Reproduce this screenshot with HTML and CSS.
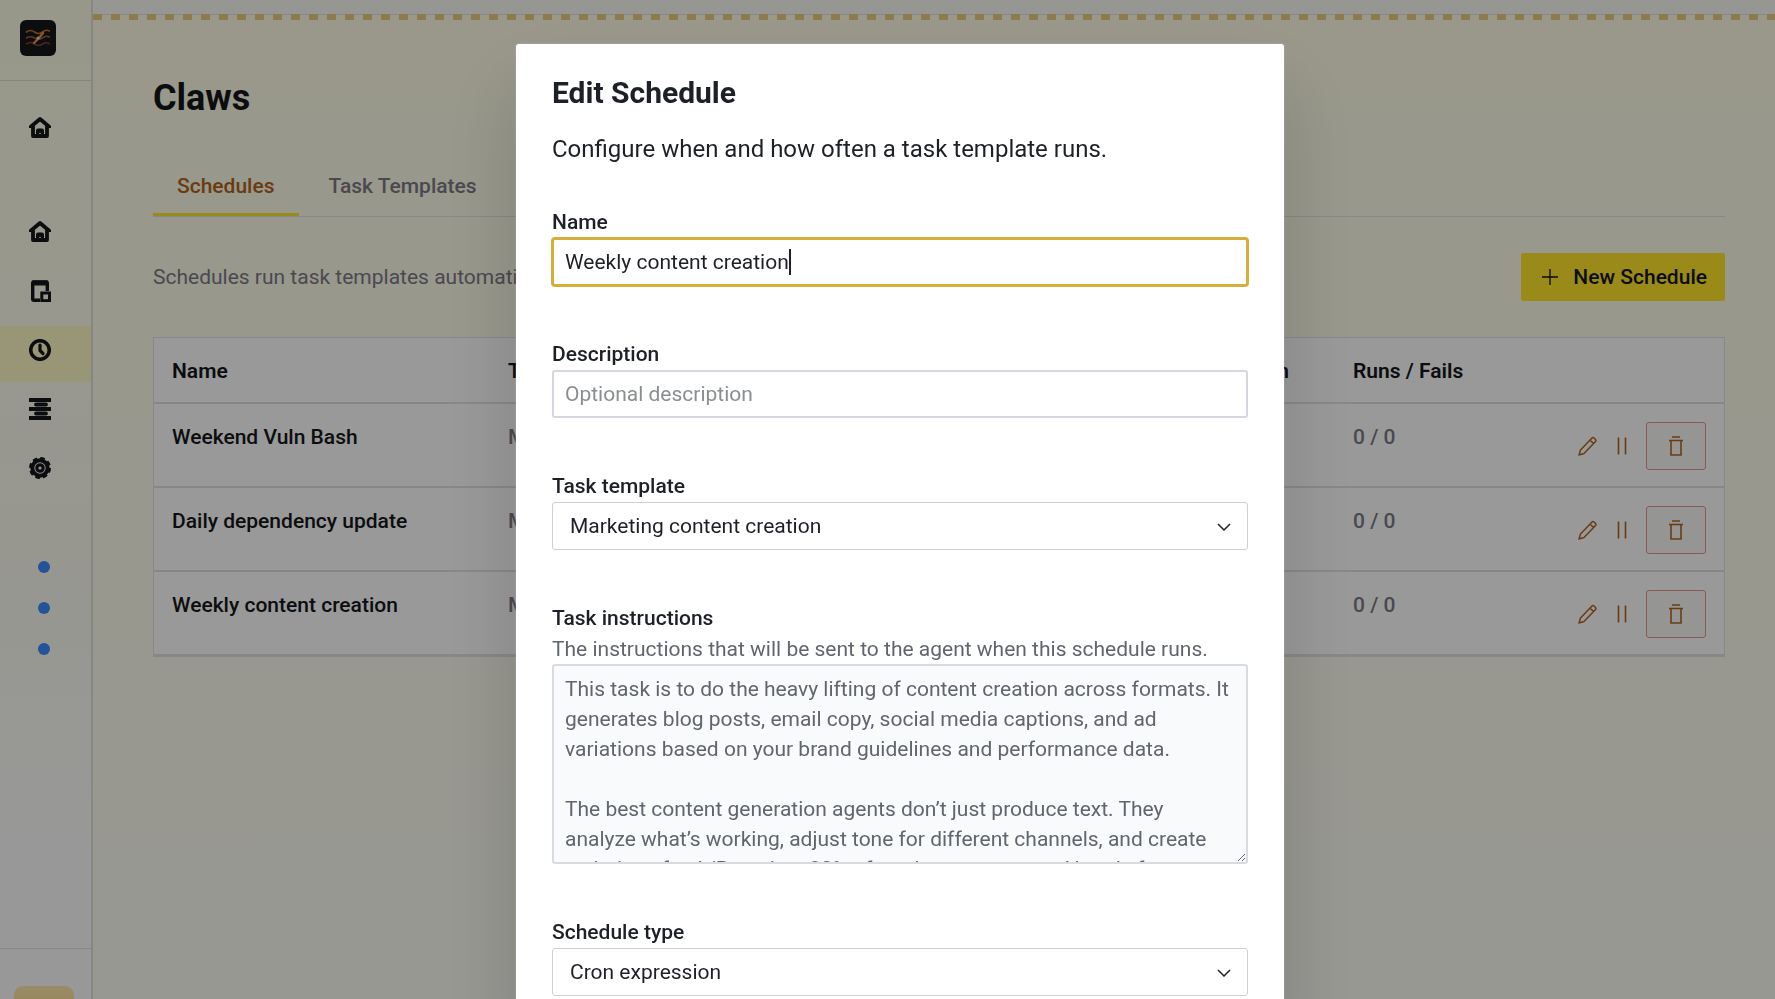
FILE: index.html
```
<!DOCTYPE html>
<html lang="en">
<head>
    <meta charset="UTF-8">
    <meta name="viewport" content="width=device-width, initial-scale=1">
    <title>Claws - Schedules</title>
    <link rel="stylesheet" href="styles.css">
</head>
<body>
    <svg class="sprite" aria-hidden="true">
        <symbol id="icon-home" viewBox="0 0 22 22">
            <path d="M1.800 11V9.800L11 2l9.200 7.800V11M4 9v10h14V9" fill="none" stroke="currentColor" stroke-width="3.800" stroke-linejoin="round"/>
            <path d="M7 20v-6.500q0-2 2-2h4q2 0 2 2V20h-3.200v-4h-1.600v4z" fill="currentColor"/>
        </symbol>
        <symbol id="icon-pencil" viewBox="0 0 20 20">
            <path d="M1 19l1.500-5L14 2q1-1 2 0l1.500 1.500q1 1 0 2L6 17.500zM12 4l3.500 3.500" fill="none" stroke="currentColor" stroke-width="1.500" stroke-linejoin="round"/>
        </symbol>
        <symbol id="icon-pause" viewBox="0 0 20 20">
            <path d="M6.500 1.500v17M13.500 1.500v17" fill="none" stroke="currentColor" stroke-width="1.600"/>
        </symbol>
        <symbol id="icon-trash" viewBox="0 0 20 20">
            <path d="M6 1h8M3 4.500h14M5 4.500v14.500h10V4.500" fill="none" stroke="currentColor" stroke-width="1.600"/>
        </symbol>
    </svg>

    <div class="app">
        <nav class="sidebar" aria-label="Main">
            <div class="sidebar-header">
                <a class="logo" href="#" aria-label="Home page">
                    <svg viewBox="0 0 36 36" width="36" height="36" fill="none" stroke-width="1.600" stroke-linecap="round">
                        <path d="M6.500 12q4-3 8 0t8 0q3-3 7-1" stroke="#c06f2c"/>
                        <path d="M6.500 18q4-2.500 8 0t8 0q3-3 7-1" stroke="#a05a33"/>
                        <path d="M6.500 24q4-3 8 0t8 0q4-2.500 7 0" stroke="#7a4030"/>
                        <path d="M14 23l5-5 4-5" stroke="#e0944a" stroke-width="2.400"/>
                        <circle cx="18" cy="18" r="1.500" fill="#f0e0c8"/>
                    </svg>
                </a>
            </div>
            <a class="nav-item nav-home" href="#" aria-label="Home"><svg><use href="#icon-home"/></svg></a>
            <div class="nav-list">
                <a class="nav-item" href="#" aria-label="Overview"><svg><use href="#icon-home"/></svg></a>
                <a class="nav-item" href="#" aria-label="Tasks">
                    <svg viewBox="0 0 22 22" fill="none" stroke="currentColor">
                        <path d="M11 20.300H5Q3.700 20.300 3.700 19V3.500Q3.700 2 5 2h12q1.300 0 1.300 1.500V11" stroke-width="3.400"/>
                        <path d="M3 3h16" stroke-width="5"/>
                        <rect x="12.800" y="13" width="7.700" height="7.700" stroke-width="3"/>
                    </svg>
                </a>
                <a class="nav-item active" href="#" aria-label="Claws">
                    <svg viewBox="0 0 22 22" fill="none" stroke="currentColor">
                        <circle cx="11" cy="11" r="9.300" stroke-width="3.600"/>
                        <path d="M11 6v5.500l3 3" stroke-width="3.200" stroke-linecap="round"/>
                    </svg>
                </a>
                <a class="nav-item" href="#" aria-label="Logs">
                    <svg viewBox="0 0 22 22" fill="none" stroke="currentColor" stroke-width="3.800">
                        <path d="M0 2h22M0 11h22M0 20h22"/>
                        <path d="M7 6.500h10M7 15.500h10" stroke-linecap="round"/>
                    </svg>
                </a>
                <a class="nav-item" href="#" aria-label="Settings">
                    <svg viewBox="0 0 22 22" fill="none" stroke="currentColor">
                        <circle cx="11" cy="11" r="7.700" stroke-width="4"/>
                        <circle cx="11" cy="11" r="9.500" stroke-width="3" stroke-dasharray="4.460 3"/>
                        <circle cx="11" cy="11" r="3.200" stroke-width="3.200"/>
                    </svg>
                </a>
            </div>
            <div class="status-dots">
                <span class="dot"></span>
                <span class="dot"></span>
                <span class="dot"></span>
            </div>
            <div class="sidebar-footer">
                <button class="avatar" type="button" aria-label="Account"></button>
            </div>
        </nav>

        <main class="main">
            <div class="top-strip"></div>
            <div class="content">
                <h1 class="page-title">Claws</h1>
                <div class="tabs">
                    <a class="tab active" href="#">Schedules</a>
                    <a class="tab" href="#">Task Templates</a>
                </div>
                <div class="toolbar">
                    <p>Schedules run task templates automatically.</p>
                    <button class="new-button" type="button">
                        <svg viewBox="0 0 16 16" width="16" height="16"><path d="M8 0v16M0 8h16" stroke="currentColor" stroke-width="1.400"/></svg>
                        New Schedule
                    </button>
                </div>
                <table class="schedules">
                    <colgroup>
                        <col class="col-name">
                        <col>
                        <col>
                        <col class="col-next">
                        <col class="col-runs">
                        <col class="col-actions">
                    </colgroup>
                    <thead>
                        <tr>
                            <th>Name</th>
                            <th>Template</th>
                            <th>Schedule</th>
                            <th>Next run</th>
                            <th>Runs / Fails</th>
                            <th></th>
                        </tr>
                    </thead>
                    <tbody>
                        <tr>
                            <td class="name">Weekend Vuln Bash</td>
                            <td>Manual</td>
                            <td></td>
                            <td></td>
                            <td>0 / 0</td>
                            <td>
                                <div class="actions">
                                    <button type="button" aria-label="Edit"><svg><use href="#icon-pencil"/></svg></button>
                                    <button type="button" aria-label="Pause"><svg><use href="#icon-pause"/></svg></button>
                                    <button class="delete" type="button" aria-label="Delete"><svg><use href="#icon-trash"/></svg></button>
                                </div>
                            </td>
                        </tr>
                        <tr>
                            <td class="name">Daily dependency update</td>
                            <td>Manual</td>
                            <td></td>
                            <td></td>
                            <td>0 / 0</td>
                            <td>
                                <div class="actions">
                                    <button type="button" aria-label="Edit"><svg><use href="#icon-pencil"/></svg></button>
                                    <button type="button" aria-label="Pause"><svg><use href="#icon-pause"/></svg></button>
                                    <button class="delete" type="button" aria-label="Delete"><svg><use href="#icon-trash"/></svg></button>
                                </div>
                            </td>
                        </tr>
                        <tr>
                            <td class="name">Weekly content creation</td>
                            <td>Marketing</td>
                            <td></td>
                            <td></td>
                            <td>0 / 0</td>
                            <td>
                                <div class="actions">
                                    <button type="button" aria-label="Edit"><svg><use href="#icon-pencil"/></svg></button>
                                    <button type="button" aria-label="Pause"><svg><use href="#icon-pause"/></svg></button>
                                    <button class="delete" type="button" aria-label="Delete"><svg><use href="#icon-trash"/></svg></button>
                                </div>
                            </td>
                        </tr>
                    </tbody>
                </table>
            </div>
        </main>
    </div>

    <div class="overlay">
        <form class="modal" role="dialog" aria-labelledby="modal-title">
            <h2 id="modal-title">Edit Schedule</h2>
            <p class="modal-intro">Configure when and how often a task template runs.</p>

            <div class="field">
                <label for="name">Name</label>
                <div class="input-wrap">
                    <input class="focused" id="name" type="text" value="Weekly content creation">
                    <span class="caret"></span>
                </div>
            </div>

            <div class="field">
                <label for="description">Description</label>
                <input id="description" type="text" placeholder="Optional description">
            </div>

            <div class="field">
                <label for="template">Task template</label>
                <div class="select-wrap">
                    <select id="template">
                        <option>Marketing content creation</option>
                    </select>
                    <svg class="chevron" viewBox="0 0 14 8"><path d="M1 1l6 6 6-6" fill="none" stroke="currentColor" stroke-width="1.500"/></svg>
                </div>
            </div>

            <div class="field">
                <label for="instructions">Task instructions</label>
                <p class="help">The instructions that will be sent to the agent when this schedule runs.</p>
                <textarea id="instructions" readonly>This task is to do the heavy lifting of content creation across formats. It generates blog posts, email copy, social media captions, and ad variations based on your brand guidelines and performance data.

The best content generation agents don’t just produce text. They analyze what’s working, adjust tone for different channels, and create variations for A/B testing. 80% of marketers now use AI tools for</textarea>
            </div>

            <div class="field">
                <label for="type">Schedule type</label>
                <div class="select-wrap">
                    <select id="type">
                        <option>Cron expression</option>
                    </select>
                    <svg class="chevron" viewBox="0 0 14 8"><path d="M1 1l6 6 6-6" fill="none" stroke="currentColor" stroke-width="1.500"/></svg>
                </div>
            </div>
        </form>
    </div>
</body>
</html>
```
FILE: styles.css
```
:root {
    --yellow: #ffe62a;
    --text: #1d2026;
    --muted: #7c7a86;
    --border: #e2e1e6;
    --brown: #b0651c;
}

* {
    box-sizing: border-box;
}

body {
    margin: 0;
    font-family: Roboto, "Liberation Sans", sans-serif;
    font-size: 21px;
    line-height: 30px;
    color: #15161a;
    background: #fcfdf3;
    overflow: hidden;
}

h1, h2, p {
    margin: 0;
}

button, input, select, textarea {
    font: inherit;
    color: inherit;
}

.sprite {
    display: none;
}

.app {
    display: flex;
    height: 100vh;
    background: linear-gradient(#fffee7, #fcfdf4);
}

/* Sidebar */
.sidebar {
    display: flex;
    flex-direction: column;
    width: 93px;
    flex-shrink: 0;
    border-right: 2px solid #e3e0d8;
    background: linear-gradient(#fefde6, #fcfcf2 60%, #fdfdfd 85%);
}

.sidebar-header {
    height: 81px;
    padding: 20px;
    border-bottom: 1px solid #e0dcd2;
}

.logo {
    display: block;
    width: 36px;
    height: 36px;
    border-radius: 6px;
    background: #15161a;
}

.nav-item {
    display: flex;
    align-items: center;
    height: 56px;
    padding: 0 0 8px 29px;
    color: #15161a;
}

.nav-item svg {
    width: 22px;
    height: 22px;
}

.nav-item.active {
    background: #fff9c6;
}

.nav-home {
    margin-top: 23px;
}

.nav-list {
    display: flex;
    flex-direction: column;
    gap: 3px;
    margin-top: 48px;
}

.status-dots {
    display: flex;
    flex-direction: column;
    gap: 29px;
    margin: 61px 0 0 38px;
}

.dot {
    width: 12px;
    height: 12px;
    border-radius: 50%;
    background: #3d8bff;
}

.sidebar-footer {
    height: 51px;
    margin-top: auto;
    padding: 37px 14px 0;
    border-top: 1px solid #e3e3e3;
    overflow: hidden;
}

.avatar {
    display: block;
    width: 60px;
    height: 60px;
    border: 0;
    border-radius: 9px;
    background: linear-gradient(#ffe8ae, #f5d850);
}

/* Main area */
.main {
    flex: 1;
    min-width: 0;
}

.top-strip {
    height: 20px;
    border-top: 14px solid #fbfbf3;
    background:
        repeating-linear-gradient(90deg, #e8ce80 0 9px, transparent 9px 18px),
        linear-gradient(#e3e3e8 0 1px, transparent 1px);
}

.content {
    padding: 54px 50px 0 60px;
}

.page-title {
    font-size: 36px;
    line-height: 48px;
    font-weight: 700;
}

.tabs {
    display: flex;
    gap: 6px;
    margin-top: 35px;
    border-bottom: 1px solid #e3e3e8;
}

.tab {
    padding: 14px 24px 12px;
    border-bottom: 3px solid transparent;
    color: var(--muted);
    font-weight: 500;
    text-decoration: none;
}

.tab.active {
    color: var(--brown);
    border-bottom-color: var(--yellow);
}

.toolbar {
    display: flex;
    align-items: center;
    justify-content: space-between;
    margin-top: 36px;
    color: var(--muted);
}

.new-button {
    display: flex;
    align-items: center;
    gap: 15px;
    height: 48px;
    padding: 0 18px 0 21px;
    border: 0;
    border-radius: 2px;
    background: var(--yellow);
    color: #15161a;
    font-weight: 500;
}

.schedules {
    width: 100%;
    margin-top: 36px;
    table-layout: fixed;
    border-collapse: separate;
    border-spacing: 0;
    border: 1px solid var(--border);
    background: #fff;
}

.col-name {
    width: 336px;
}

.col-next {
    width: 144px;
}

.col-runs {
    width: 200px;
}

.col-actions {
    width: 189px;
}

.schedules th,
.schedules td {
    padding: 18px 18px 16px;
    border-bottom: 2px solid var(--border);
    text-align: left;
    vertical-align: top;
    white-space: nowrap;
}

.schedules th {
    height: 66px;
    font-weight: 600;
}

.schedules td {
    height: 84px;
    color: var(--muted);
    font-weight: 500;
}

.schedules td.name {
    color: #15161a;
}

.actions {
    display: flex;
    align-items: center;
    justify-content: flex-end;
    gap: 14px;
}

.actions button {
    display: flex;
    align-items: center;
    justify-content: center;
    height: 48px;
    padding: 0;
    border: 0;
    background: none;
    color: var(--brown);
}

.actions .delete {
    width: 60px;
    border: 1px solid #e5958f;
    border-radius: 3px;
    background: #f9f8f5;
}

.actions svg {
    width: 20px;
    height: 20px;
}

/* Modal */
.overlay {
    position: fixed;
    inset: 0;
    display: flex;
    align-items: flex-start;
    justify-content: center;
    padding: 44px 0 0 25px;
    background: rgba(0, 0, 0, 0.4);
    overflow: hidden;
}

.modal {
    width: 768px;
    padding: 31px 36px 36px;
    border-radius: 3px;
    background: #fff;
    color: var(--text);
    box-shadow: 0 0 1px 1px rgba(255, 255, 255, 0.1), 0 40px 80px rgba(0, 0, 0, 0.16);
}

.modal h2 {
    font-size: 30px;
    line-height: 36px;
    font-weight: 700;
}

.modal-intro {
    margin: 20px 0 39px;
    font-size: 24px;
    line-height: 36px;
}

.field {
    margin-bottom: 52px;
}

.field:last-child {
    margin-bottom: 0;
}

.field label {
    display: block;
    line-height: 32px;
    font-weight: 500;
}

.help {
    color: #61656e;
}

.field input,
.field select,
.field textarea {
    display: block;
    width: 100%;
    height: 48px;
    margin: 0;
    padding: 0 11px;
    border: 2px solid #d6d7de;
    border-radius: 3px;
    background: #fff;
    outline: none;
}

.field input::placeholder {
    color: #8a8e90;
}

.field input.focused {
    outline: 3px solid #d6ae3c;
    outline-offset: -2px;
}

.input-wrap,
.select-wrap {
    position: relative;
}

.caret {
    position: absolute;
    top: 11px;
    left: 237px;
    width: 2px;
    height: 26px;
    background: var(--text);
}

.field select {
    padding: 0 17px;
    border: 1px solid #cfcfd8;
    appearance: none;
}

.chevron {
    position: absolute;
    top: 21px;
    right: 17px;
    width: 14px;
    height: 8px;
    pointer-events: none;
}

.field textarea {
    height: 200px;
    padding: 8px 11px;
    border-color: #dadbe0;
    background: #f9fafc;
    color: #61656e;
    resize: vertical;
    overflow: hidden;
}
```
